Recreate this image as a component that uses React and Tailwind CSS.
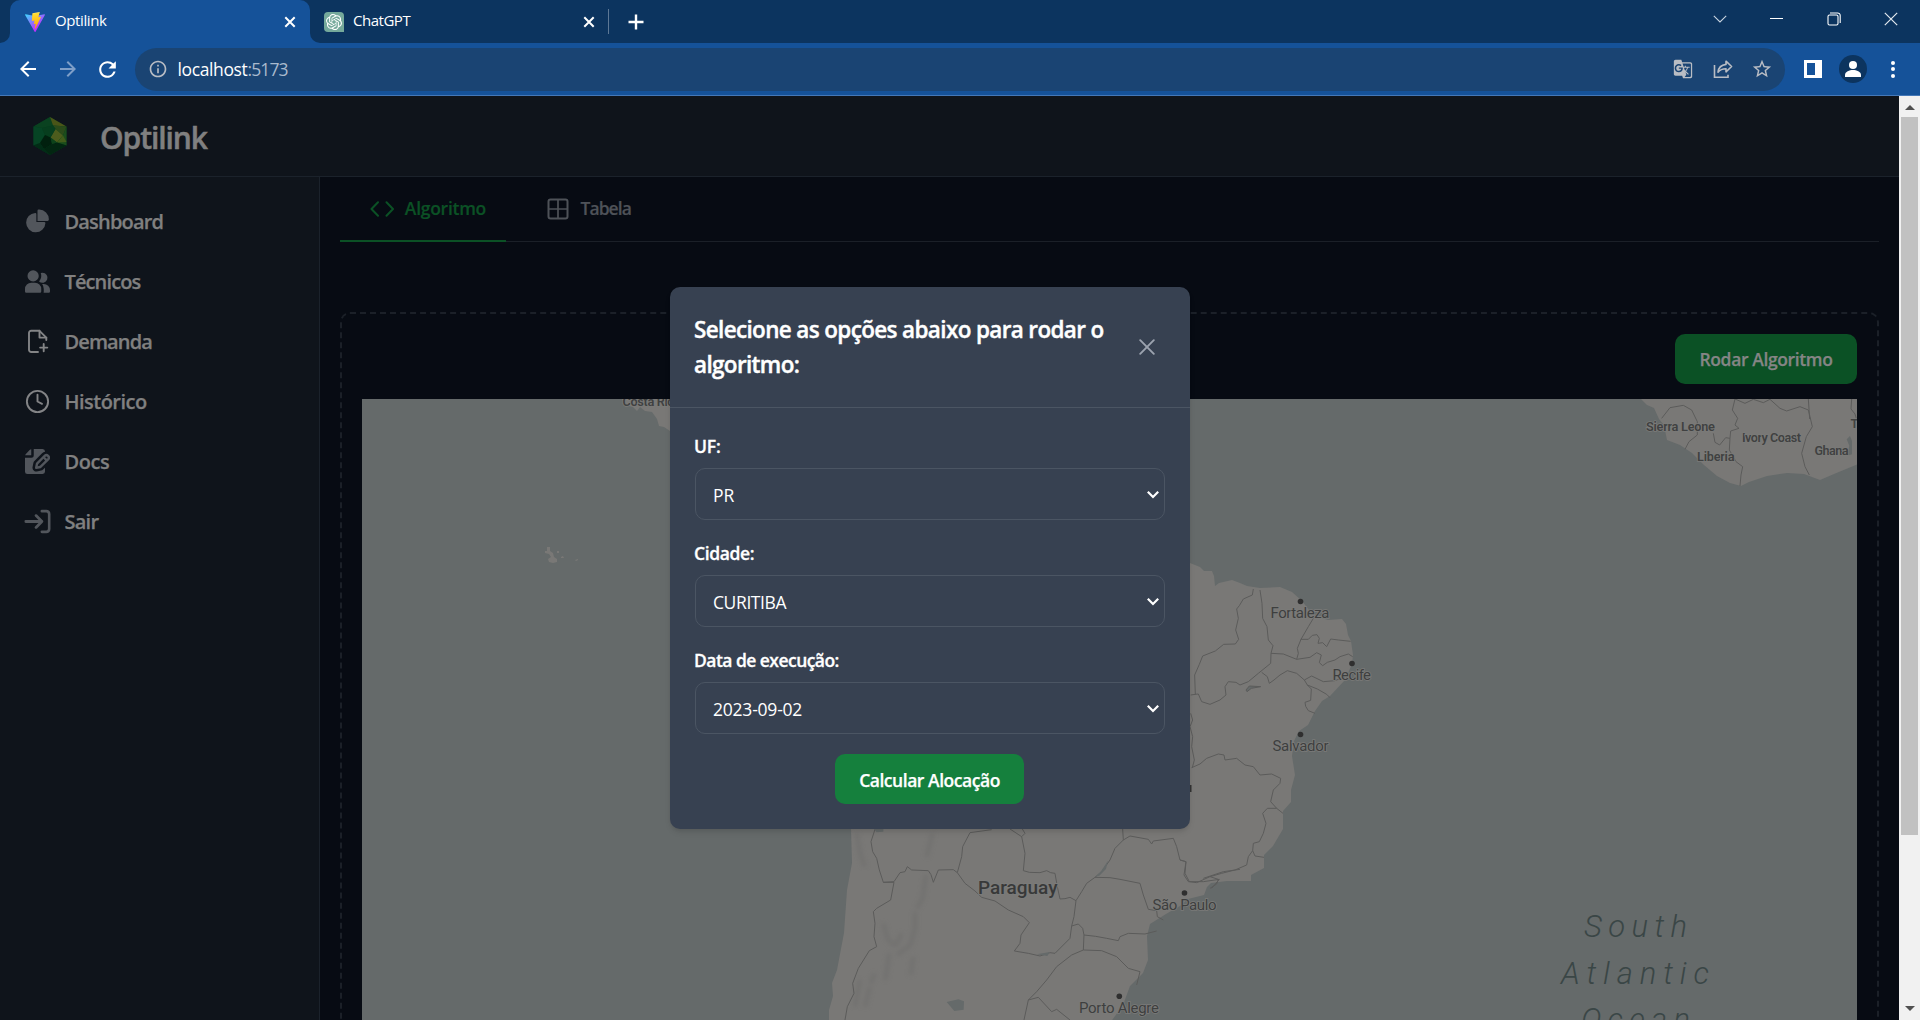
import React from 'react';
import {
  MdArrowBack,
  MdArrowForward,
  MdRefresh,
  MdInfoOutline,
  MdStarBorder,
  MdGTranslate,
} from 'react-icons/md';
import { SiOpenai } from 'react-icons/si';

/* ---------- browser chrome ---------- */

function CloseX({ className }) {
  return (
    <svg viewBox="0 0 12 12" className={className} fill="none" stroke="currentColor" strokeWidth="2">
      <path d="M1.3 1.3l9.4 9.4M10.7 1.3l-9.4 9.4" />
    </svg>
  );
}

function ViteLogo() {
  return (
    <svg viewBox="0 0 256 257" className="h-5 w-5 shrink-0">
      <defs>
        <linearGradient id="vA" x1="-.8%" x2="57.6%" y1="7.7%" y2="78.4%">
          <stop offset="0%" stopColor="#41D1FF" />
          <stop offset="100%" stopColor="#BD34FE" />
        </linearGradient>
        <linearGradient id="vB" x1="43.4%" x2="50.3%" y1="2.2%" y2="89%">
          <stop offset="0%" stopColor="#FFEA83" />
          <stop offset="8.3%" stopColor="#FFDD35" />
          <stop offset="100%" stopColor="#FFA800" />
        </linearGradient>
      </defs>
      <path
        fill="url(#vA)"
        d="M255.153 37.938L134.897 252.976c-2.483 4.44-8.862 4.466-11.382.048L.875 37.958c-2.746-4.814 1.371-10.646 6.827-9.67l120.385 21.517a6.537 6.537 0 0 0 2.322-.004l117.867-21.483c5.438-.991 9.574 4.796 6.877 9.62Z"
      />
      <path
        fill="url(#vB)"
        d="M185.432.063L96.44 17.501a3.268 3.268 0 0 0-2.634 3.014l-5.474 92.456a3.268 3.268 0 0 0 3.997 3.378l24.777-5.718c2.318-.535 4.413 1.507 3.936 3.838l-7.361 36.047c-.495 2.426 1.782 4.5 4.151 3.78l15.304-4.649c2.372-.72 4.652 1.36 4.15 3.788l-11.698 56.621c-.732 3.542 3.979 5.473 5.943 2.437l1.313-2.028l72.516-144.72c1.215-2.423-.88-5.186-3.54-4.672l-25.505 4.922c-2.396.462-4.435-1.77-3.759-4.114l16.646-57.705c.677-2.35-1.37-4.583-3.769-4.113Z"
      />
    </svg>
  );
}

function TabStrip() {
  return (
    <div className="flex h-[43px] bg-[#0c345f] text-[15px] text-white">
      <div className="flex w-[10px] shrink-0 items-end bg-[#155299]">
        <div className="h-full w-full rounded-br-[10px] bg-[#0c345f]" />
      </div>
      <div className="h-full w-[300px] shrink-0 bg-[#0c345f]">
        <div className="flex h-full items-center rounded-t-[10px] bg-[#155299] pl-[15px] pr-[14px]">
          <ViteLogo />
          <span className="ml-[10px] flex-1 pb-[2px] tracking-[-0.39px]">Optilink</span>
          <CloseX className="h-3 w-3" />
        </div>
      </div>
      <div className="w-[298px] shrink-0 bg-[#155299]">
        <div className="flex h-full items-center rounded-bl-[10px] bg-[#0c345f] pl-[14px] pr-[13px]">
          <div className="flex h-5 w-5 items-center justify-center rounded-l-[4px] rounded-tr-[4px] bg-[#75a99b]">
            <SiOpenai className="h-4 w-4" />
          </div>
          <span className="ml-[9px] flex-1 pb-[2px] tracking-[-0.48px]">ChatGPT</span>
          <CloseX className="h-3 w-3" />
        </div>
      </div>
      <div className="flex flex-1 items-center">
        <div className="h-[25px] w-px bg-[#5d7896]" />
        <svg viewBox="0 0 16 16" className="ml-[19px] h-4 w-4" stroke="white" strokeWidth="2.4">
          <path d="M8 .5v15M.5 8h15" />
        </svg>
      </div>
      <div className="flex h-[37px] text-white">
        <div className="flex w-[57px] items-center justify-center">
          <svg viewBox="0 0 14 8" className="h-2 w-3.5" fill="none" stroke="#c9d4e0" strokeWidth="1.1">
            <path d="M.8.8L7 7l6.2-6.2" />
          </svg>
        </div>
        <div className="flex w-[57px] items-center justify-center">
          <div className="h-px w-[13px] bg-white" />
        </div>
        <div className="flex w-[57px] items-center justify-center">
          <svg viewBox="0 0 14 14" className="h-3.5 w-3.5" fill="none" stroke="white" strokeWidth="1.1">
            <rect x="1" y="3" width="10" height="10" rx="1.5" />
            <path d="M3 1h7.5A2.6 2.6 0 0 1 13.2 3.6V11" />
          </svg>
        </div>
        <div className="flex w-[58px] items-center justify-center">
          <svg viewBox="0 0 14 14" className="h-3.5 w-3.5" stroke="#e3e9ef" strokeWidth="1.2">
            <path d="M.8.8l12.4 12.4M13.2.8L.8 13.2" />
          </svg>
        </div>
      </div>
    </div>
  );
}

function Toolbar() {
  return (
    <div className="flex h-[53px] items-center border-b border-[#4478b8] bg-[#155299] px-[7.5px] text-white">
      <div className="flex w-10 justify-center">
        <MdArrowBack className="h-6 w-6" />
      </div>
      <div className="flex w-10 justify-center text-[#7f9fc8]">
        <MdArrowForward className="h-6 w-6" />
      </div>
      <div className="flex w-10 justify-center">
        <MdRefresh className="h-[25px] w-[25px]" />
      </div>
      <div className="mx-[7.5px] flex h-[43px] flex-1 items-center rounded-full bg-[#1a4473] pl-[12.5px] pr-[12.5px] text-[17.5px] text-[#b9bdc4]">
        <MdInfoOutline className="h-5 w-5" />
        <span className="ml-[10px] pt-px text-white tracking-[-0.38px]">localhost</span>
        <span className="flex-1 pt-px text-[#a9bacd] tracking-[-0.85px]">:5173</span>
        <MdGTranslate className="h-5 w-5" />
        <svg viewBox="0 0 20 20" className="ml-[20px] h-5 w-5" fill="none" stroke="currentColor" strokeWidth="1.6">
          <path d="M1.5 6v12.2h13.5v-2.5" />
          <path d="M13 2.2l5.6 5.3-5.6 5.3v-3.1c-4 0-6 .9-8 3.5.5-4.4 3-7.2 8-7.8z" strokeLinejoin="round" />
        </svg>
        <MdStarBorder className="ml-[18px] h-[22px] w-[22px]" />
      </div>
      <div className="flex w-10 justify-center">
        <div className="h-[18px] w-[18px] border-[3px] border-r-[7px] border-white" />
      </div>
      <div className="flex w-10 justify-center">
        <svg viewBox="0 0 28 28" className="h-7 w-7">
          <circle cx="14" cy="14" r="14" fill="#0c345f" />
          <circle cx="14" cy="10" r="4" fill="white" />
          <path d="M6 22v-2c0-3.5 4.5-5 8-5s8 1.5 8 5v2z" fill="white" />
        </svg>
      </div>
      <div className="flex w-10 flex-col items-center gap-[2.5px]">
        <div className="h-1 w-1 rounded-full bg-white" />
        <div className="h-1 w-1 rounded-full bg-white" />
        <div className="h-1 w-1 rounded-full bg-white" />
      </div>
    </div>
  );
}

function Scrollbar() {
  return (
    <div className="flex w-[21px] shrink-0 flex-col items-center bg-[#f1f1f1]">
      <div className="flex h-[21px] items-center pt-[2px]">
        <svg viewBox="0 0 10 5" className="h-[5px] w-[10px]" fill="#505050">
          <path d="M0 5L5 0l5 5z" />
        </svg>
      </div>
      <div className="h-[718px] w-[17px] bg-[#c1c1c1]" />
      <div className="flex-1" />
      <div className="flex h-[21px] items-center pb-[3px]">
        <svg viewBox="0 0 10 5" className="h-[5px] w-[10px]" fill="#505050">
          <path d="M0 0l5 5 5-5z" />
        </svg>
      </div>
    </div>
  );
}

/* ---------- page ---------- */

function Logo() {
  return (
    <svg viewBox="0 0 34 38" className="h-[38px] w-[34px]">
      <path d="M17 0l16.5 9.5v19L17 38 .5 28.5v-19z" fill="#033d1f" />
      <path d="M17 0l3 8.5-11 2.5-8.5-1.5z" fill="#0a4220" />
      <path d="M17 0l16.5 9.5L20 8.5z" fill="#4a5518" />
      <path d="M20 8.5l13.5 1-3.5 9-7.5-6.5z" fill="#2b4a1a" />
      <path d="M22.5 12l7.5 6.5-6 7-6.5-5z" fill="#4d5c1d" />
      <path d="M33.5 9.5v19l-9.500-3 6-7z" fill="#1b4d1c" />
      <path d="M30 18.500l3.500 6.500-9.500.5z" fill="#425c1a" />
      <path d="M.5 9.500L9 11l3 7-5 8-6.500 2.500z" fill="#064424" />
      <path d="M9 11l11-2.500 2.500 3.500-5 8.500L12 18z" fill="#073e1e" />
      <path d="M12 18l5.500 2.500L19 27l-8 5-4-6z" fill="#01200e" />
      <path d="M.5 28.500L7 26l4 6 6 6z" fill="#022c16" />
      <path d="M19 27l5-1.500 9.500 3L17 38l-6-6z" fill="#022611" />
      <path d="M17.500 20.500l6.500 5-5 1.500z" fill="#0d431a" />
    </svg>
  );
}

function Header() {
  return (
    <div className="flex h-[81px] shrink-0 items-center border-b border-[#1b222b] bg-[#0f141b] pl-[33px]">
      <Logo />
      <span className="ml-[33px] pt-[2px] text-[30px] font-semibold text-[#808080] tracking-[-1.08px] [-webkit-text-stroke:0.5px_#808080]">
        Optilink
      </span>
    </div>
  );
}

const PieIcon = () => (
  <svg viewBox="0 0 22 21" className="h-[25px] w-[25px]" fill="currentColor">
    <path d="M16.975 11H10V4.025a1 1 0 0 0-1.066-.998 8.5 8.5 0 1 0 9.039 9.039.999.999 0 0 0-1-1.066h.002Z" />
    <path d="M12.5 0c-.157 0-.311.01-.565.027A1 1 0 0 0 11 1.02V10h8.975a1 1 0 0 0 1-.935c.013-.188.028-.374.028-.565A8.51 8.51 0 0 0 12.5 0Z" />
  </svg>
);

const UsersIcon = () => (
  <svg viewBox="0 0 20 18" className="h-[25px] w-[25px]" fill="currentColor">
    <path d="M14 2a3.963 3.963 0 0 0-1.4.267 6.439 6.439 0 0 1-1.331 6.638A4 4 0 1 0 14 2Zm1 9h-1.264A6.957 6.957 0 0 1 15 15v2a2.97 2.97 0 0 1-.184 1H19a1 1 0 0 0 1-1v-1a5.006 5.006 0 0 0-5-5ZM6.5 9a4.5 4.5 0 1 0 0-9 4.5 4.5 0 0 0 0 9ZM8 10H5a5.006 5.006 0 0 0-5 5v2a1 1 0 0 0 1 1h11a1 1 0 0 0 1-1v-2a5.006 5.006 0 0 0-5-5Z" />
  </svg>
);

const FilePlusIcon = () => (
  <svg viewBox="0 0 25 25" className="h-[25px] w-[25px] text-[#838486]" fill="none" stroke="currentColor" strokeWidth="1.9" strokeLinecap="round" strokeLinejoin="round">
    <path d="M13 23H6.2a2.2 2.2 0 0 1-2.2-2.2V4A2.2 2.2 0 0 1 6.2 1.8h8.3L21.3 8.6V11" />
    <path d="M14.5 1.8v6.8h6.8" />
    <path d="M18.7 15v7.2M15.1 18.6h7.2" />
  </svg>
);

const ClockIcon = () => (
  <svg viewBox="0 0 25 25" className="h-[25px] w-[25px] text-[#838486]" fill="none" stroke="currentColor" strokeWidth="1.9" strokeLinecap="round" strokeLinejoin="round">
    <circle cx="12.5" cy="12.5" r="10.6" />
    <path d="M12.5 5.8v6.7l4.5 2.3" />
  </svg>
);

const DocsIcon = () => (
  <svg viewBox="0 0 20 20" className="h-[25px] w-[25px]" fill="currentColor">
    <path d="M5 5V.13a2.96 2.96 0 0 0-1.293.749L.879 3.707A2.96 2.96 0 0 0 .13 5H5Z" />
    <path d="M6.737 11.061a2.961 2.961 0 0 1 .81-1.515l6.117-6.116A4.839 4.839 0 0 1 16 2.141V2a1.97 1.97 0 0 0-1.933-2H7v5a2 2 0 0 1-2 2H0v11a1.969 1.969 0 0 0 1.933 2h12.134A1.97 1.97 0 0 0 16 18v-3.093l-1.546 1.546c-.413.413-.94.695-1.513.81l-3.4.679a2.947 2.947 0 0 1-1.85-.227 2.96 2.96 0 0 1-1.635-3.257l.681-3.397Z" />
    <path d="M8.961 16a.93.93 0 0 0 .189-.019l3.4-.679a.961.961 0 0 0 .49-.263l6.118-6.117a2.884 2.884 0 0 0-4.079-4.078l-6.117 6.117a.96.96 0 0 0-.263.491l-.679 3.4A.961.961 0 0 0 8.961 16Zm7.477-9.8a.958.958 0 0 1 .68-.281.961.961 0 0 1 .682 1.644l-.315.315-1.36-1.36.313-.318Zm-5.911 5.911 4.236-4.236 1.359 1.359-4.236 4.237-1.7.339.341-1.699Z" />
  </svg>
);

const SairIcon = () => (
  <svg viewBox="0 0 18 16" className="h-[25px] w-[25px] scale-[1.06]" fill="none" stroke="currentColor" strokeWidth="1.9" strokeLinecap="round" strokeLinejoin="round">
    <path d="M1 8h11m0 0L8 4m4 4-4 4m4-11h3a2 2 0 0 1 2 2v10a2 2 0 0 1-2 2h-3" />
  </svg>
);

const NAV = [
  { label: 'Dashboard', Icon: PieIcon, cls: 'tracking-[-0.82px]' },
  { label: 'Técnicos', Icon: UsersIcon, cls: 'tracking-[-0.88px]' },
  { label: 'Demanda', Icon: FilePlusIcon, cls: 'tracking-[-0.88px]' },
  { label: 'Histórico', Icon: ClockIcon, cls: 'tracking-[-0.52px]' },
  { label: 'Docs', Icon: DocsIcon, cls: 'tracking-[-0.4px]' },
  { label: 'Sair', Icon: SairIcon, cls: 'tracking-[-0.75px]' },
];

function Sidebar() {
  return (
    <div className="flex w-[320px] shrink-0 flex-col border-r border-[#1b222b] bg-[#0f141b] pl-[25px] pt-[14px]">
      {NAV.map(({ label, Icon, cls }) => (
        <div key={label} className="flex h-[60px] items-center text-[#52565c]">
          <Icon />
          <span className="ml-[14.5px] pt-[2px] text-[20px] font-semibold leading-none text-[#808080] [-webkit-text-stroke:0.25px_#808080]">
            <span className={cls}>{label}</span>
          </span>
        </div>
      ))}
    </div>
  );
}

function Tabs() {
  return (
    <div className="flex h-[65px] border-b border-[#1b2028] text-[17.5px] font-semibold">
      <div className="-mb-px flex w-[166px] items-center justify-between border-b-2 border-[#0b5125] pl-[30px] pr-[20px] text-[#0b5125]">
        <svg viewBox="0 0 24 16" className="h-4 w-6" fill="none" stroke="currentColor" strokeWidth="2" strokeLinecap="round" strokeLinejoin="round">
          <path d="M8 1.3L1.5 8 8 14.7M16.5 1.3L23 8l-6.5 6.7" />
        </svg>
        <span className="tracking-[-0.27px] [-webkit-text-stroke:0.2px_#0b5125]">Algoritmo</span>
      </div>
      <div className="ml-[41px] flex items-center pb-px text-[#4e5258]">
        <svg viewBox="0 0 22 22" className="h-[22px] w-[22px]" fill="none" stroke="currentColor" strokeWidth="2">
          <rect x="1.5" y="1.5" width="19" height="19" rx="2" />
          <path d="M11 1.5v19M1.5 11h19" strokeWidth="1.7" />
        </svg>
        <span className="ml-[11.5px] tracking-[-0.95px] [-webkit-text-stroke:0.2px_#4e5258]">Tabela</span>
      </div>
    </div>
  );
}

const CITIES = [
  { name: 'Fortaleza', x: 1270.5, y: 618, w: 59, cx: 1300.5, cy: 601.5 },
  { name: 'Recife', x: 1332.5, y: 680, w: 38.5, cx: 1352, cy: 663.5 },
  { name: 'Salvador', x: 1272.5, y: 751, w: 56, cx: 1300.5, cy: 734.5 },
  { name: 'São Paulo', x: 1152.5, y: 909.5, w: 64, cx: 1184.5, cy: 893 },
  { name: 'Porto Alegre', x: 1079, y: 1013, w: 80, cx: 1119.3, cy: 996.3 },
];

const COUNTRIES = [
  { name: 'Sierra Leone', x: 1646, y: 431, w: 69 },
  { name: 'Ivory Coast', x: 1742, y: 441.5, w: 59 },
  { name: 'Liberia', x: 1697, y: 461.3, w: 37.5 },
  { name: 'Ghana', x: 1814.5, y: 454.7, w: 34 },
  { name: 'Costa Rica', x: 622.5, y: 406, w: 58 },
];

const OCEAN = [
  { word: 'South', x: 1584, y: 937, w: 103 },
  { word: 'Atlantic', x: 1561, y: 983.5, w: 148 },
  { word: 'Ocean', x: 1581, y: 1029.5, w: 109 },
];

function SouthAmericaMap() {
  return (
    <svg viewBox="362 399 1495 621" className="h-[621px] w-[1495px] bg-[#656a6a]">
      <defs>
        <filter id="soft" x="-20%" y="-20%" width="140%" height="140%">
          <feGaussianBlur stdDeviation="6" />
        </filter>
      </defs>
      <g fill="#797876">
        <path d="M851 829V700L780 640V540L900 450h200l90 113 10 4 4 4 8 0 2 5 1 10 4-3 13-3 8 3 7 3 13 2 20-1 12 5 10 9 11 14 15 5 14-1 4 5 2 11 3 6 2 14-1 9-7 16-15 16-8 5-7 10-7 14-9 6-5 10-2 15 3 19-4 15v12l-8 9v18l-10 17-9 9v13l-13 7v6l-24 0-8 1-8 1-4 4-3 8-8 2-8 2-8 7-14 8-16 10-3 12 1 24-5 13-13 13-7 19-13 18H829l0-13 4-14-1-13 5-13 7-37 3-43 5-27z" />
        <path d="M1641 399l6 6 7 3 5 11 5 6 3 15 13 5 12 8 12 12 13 11 13 7 11 3 8-4 18-6 20-3 17 1 16 6 14-6 24-10V399z" />
        <path d="M622 399l3 6 8 2 4 4 3-4 5 4 7 1 5 7 2 7 5 1 6 4V399z" />
        <path d="M547 547h3v4l3 2 1 4 3 2v3l-4 1-4-1-1-3 3-2-2-3-4-1v-2h2zM561 557l2-1 1 2h-3zM575 560l3-1v1l-2 1zM557 551h2v2h-2z" />
      </g>
      <g fill="none" stroke="#6b6a69" strokeWidth="12" filter="url(#soft)" strokeLinejoin="round" transform="translate(820 820) scale(.33333)" opacity=".5">
        <path d="M338 40l-18 70M318 165l-10 70-18 30M285 275l0 50-14 50-40 30M190 310l12 45 18 20M208 400l-12 80M280 410l-8 55M110 40l10 60 15 40M120 480l-15 80M150 500l-15 60M165 460l-14 30M245 340l-20 40" />
      </g>
      <g fill="none" stroke="#5b5b5a" strokeWidth="3" strokeLinejoin="round" transform="translate(1180 540) scale(.33333)">
        <path d="M220 147l-3 18-27 12-12 20-8 10 5 28-8 35 9 28-10 14-35 1-25 20-38 15-10 25-14 32 2 58-14 2" />
        <path d="M240 150l6 40 2 45 13 25 4 40 14 17-6 23 37 2 40 16 5-18-3-15 11-27 22-38 15-25" />
        <path d="M362 298l23 0 12-12 14-2 7 11-4 15 14-2 12 12 12-23 23 3 37 4" />
        <path d="M350 358l40-6 20-14 14 7-6 23 10 9 14-10 23-7 15-10 25-8 13 8" />
        <path d="M273 340l-1 30-37 30-30 25-25 10-12-8-23-2-10 15 3 25-18 15-30 13-25-8-10-23-10 1" />
        <path d="M245 397l17 13 6 20 14-10 18-15 22-13 28 8 23 20 22-12 35 17 35-3 35-14" />
        <path d="M373 420l9 15 30 12 28 16 10 10M382 435l12 12-2 34-17 6 2 12 8 13 20 8" />
        <path d="M35 683l25-11 20-17 35-13 17 3 3 15 35-5 25 20 25 5 20 25 35-3 27 13-2 15-20 20-8 35 18 20 19 15" />
        <path d="M290 805l-28 0-14 15 10 30-8 30-12 25-18 5-2 22 7 16 27 4" />
        <path d="M218 932l-13 18-5 25-35 15-40 10-35 10-40 18-22-3-13-25 3-35-18-5M90 1010l25 8-5 14-20 13M32 520l6 20-8 20 8 30-3 30 8 40-6 23" />
        <path d="M198 450l10-12 34 2-28 5-13 10z" fill="#656a6a" />
      </g>
      <g fill="none" stroke="#5b5b5a" strokeWidth="3" strokeLinejoin="round" transform="translate(820 820) scale(.33333)">
        <path d="M165 28l-12 37 5 30 12 20 8 35 12 37 32 0-10 53-42 25-10 10 5 35-3 40 8 30-22 12-33 53-17 45 4 30-20 40-7 40" />
        <path d="M190 187l32-2 18-27 15-3 7-15 13 10 50 2 8 12 7 23 15-37 45-1 12 9" />
        <path d="M515 29l-65 9-22 42-3 30-13 48 23 32 30 23 20 19 40 11 40 27 45 20 18 18-25 37-3 25-17 23 42 7 35 8 30-10 15 2 45-45 5-37" />
        <path d="M570 27l35 23 10-10-8-13M605 50l10 50-5 52 18 5 32 1 20-6 12 6 13 2 7 40 8 37 15-1 15-4 18 10-6 48-7 28" />
        <path d="M768 242l17-27 15-25 25-18 20-17 25-35 15-35 25-25 20-12 55 10 10 14 5-9 60-8 10 25 10 40 18 5-6 40 13 20 45 0 48-7-23 27M910 60l-2-33M1150 175l60-20 50-7" />
        <path d="M825 172l45 1 30 5 60 12 10 35 15 43 25 4 2 18 18 10" />
        <path d="M755 318l20-6 13 13 4 20 35 4 33 6 35 7 5-12 25-10 50 2 35-9" />
        <path d="M792 345l-2 45 55 2 45 18 35 35 35 10-10 40M790 390l-35 15-45 35-30 40-30 35-25 25-13 60M625 540l30-8 40 43 15-7 40 32" />
        <path d="M380 546l35-8 17 6-1 25-28 4zM650 403l40-7-8 12zM826 170l18-18 20-30-6 25-20 20zM160 25h30v10l-20 2z" fill="#656a6a" stroke="none" />
      </g>
      <g fill="none" stroke="#5b5b5a" strokeWidth="3" strokeLinejoin="round" transform="translate(1620 310) scale(.33333)">
        <path d="M125 325l25-32 40-7 25 14 17 35 0 40-25 20-12 23M345 267l-8 33 16 25-8 20 12 10-25 8-2 22-13-2-18 22-14-8-5-27" />
        <path d="M330 385l-2 35 20 35 20 15-5 25-3 33M345 267l30 13 25-12 30 10 20-10 30 27 20 8 40-13 25 10 5 20 7 30-18 30-14 50 10 40 13 25M565 267l4 60M695 267l-2 30 12 15 6 20" />
        <path d="M680 388l10-10 6 15 0 40-14 4 6-30z" fill="#656a6a" stroke="none" />
      </g>
      <rect x="1189" y="785" width="2.5" height="7" fill="#333" />
      <g fontFamily="Roboto, sans-serif" fontSize="15" fontWeight="400" fill="#3e3f3f" stroke="#7b7b79" strokeWidth="1.6" style={{ paintOrder: 'stroke' }}>
        {CITIES.map((c) => (
          <g key={c.name}>
            <text x={c.x} y={c.y} textLength={c.w}>{c.name}</text>
            <circle cx={c.cx} cy={c.cy} r="2.8" fill="#2f2f2f" stroke="none" />
          </g>
        ))}
      </g>
      <g fontFamily="Roboto, sans-serif" fontSize="12.8" fontWeight="600" fill="#404141" stroke="#7b7b79" strokeWidth="1.6" style={{ paintOrder: 'stroke' }}>
        {COUNTRIES.map((c) => (
          <text key={c.name} x={c.x} y={c.y} textLength={c.w}>{c.name}</text>
        ))}
        <text x="1850.5" y="427.5">T</text>
      </g>
      <text x="978" y="894" textLength="79.5" fontFamily="Roboto, sans-serif" fontSize="19" fontWeight="500" fill="#383939" stroke="#7b7b79" strokeWidth="2" style={{ paintOrder: 'stroke' }}>
        Paraguay
      </text>
      <g fontFamily="Roboto, sans-serif" fontSize="31" fontStyle="italic" fontWeight="300" fill="#3a4646">
        {OCEAN.map((o) => (
          <text key={o.word} x={o.x} y={o.y} textLength={o.w}>{o.word}</text>
        ))}
      </g>
    </svg>
  );
}

function Field({ label, value, labelCls, valueCls }) {
  return (
    <div className="flex flex-col gap-[9px]">
      <div className="-ml-px pt-px text-[17.5px] font-semibold leading-[25px] [-webkit-text-stroke:0.3px_white]">
        <span className={labelCls}>{label}</span>
      </div>
      <div className="flex h-[52px] items-center justify-between rounded-[10px] border border-[#4b5563] pl-[17px] pr-[4px] text-[17.5px]">
        <span className="pt-[2px]">
          <span className={valueCls}>{value}</span>
        </span>
        <svg viewBox="0 0 14 10" className="mt-px h-[10px] w-[14px]" fill="none" stroke="white" strokeWidth="2.2">
          <path d="M1.8 1.8L7 7l5.2-5.2" />
        </svg>
      </div>
    </div>
  );
}

function Modal() {
  return (
    <div className="h-[542px] w-[520px] rounded-[10px] bg-[#374151] text-white shadow-md">
      <div className="flex h-[121px] items-center justify-between border-b border-[#4b5563] pl-[24px] pr-[35px]">
        <h3 className="text-[22.5px] font-semibold leading-[35px] tracking-[-0.65px] [-webkit-text-stroke:0.4px_white]">
          Selecione as opções abaixo para rodar o
          <br />
          algoritmo:
        </h3>
        <svg viewBox="0 0 16 16" className="h-4 w-4" fill="none" stroke="#9ca3af" strokeWidth="1.9" strokeLinecap="round">
          <path d="M1.2 1.2l13.6 13.6M14.8 1.2L1.2 14.8" />
        </svg>
      </div>
      <div className="flex flex-col gap-5 px-[25px] pt-[25px]">
        <Field label="UF:" value="PR" labelCls="tracking-[-0.16px]" valueCls="" />
        <Field label="Cidade:" value="CURITIBA" labelCls="tracking-[-0.36px]" valueCls="tracking-[-0.4px]" />
        <Field label="Data de execução:" value="2023-09-02" labelCls="tracking-[-0.54px]" valueCls="tracking-[-0.22px]" />
        <button className="mr-px h-[50px] w-[189px] self-center rounded-[10px] bg-[#15803d] pt-[2px] text-[17.5px] font-semibold tracking-[-0.46px] [-webkit-text-stroke:0.25px_white]">
          Calcular Alocação
        </button>
      </div>
    </div>
  );
}

function Content() {
  return (
    <div className="min-w-0 flex-1 overflow-hidden bg-[#070b13] px-5">
      <Tabs />
      <div className="mt-[70px] h-[900px] rounded-[10px] border-2 border-dashed border-[#1b2028] p-5">
        <div className="flex flex-col items-end">
          <button className="h-[50px] w-[182px] rounded-[10px] bg-[#0b5125] pt-px text-[17.5px] font-semibold text-[#858585] tracking-[-0.37px] [-webkit-text-stroke:0.25px_#858585]">
            Rodar Algoritmo
          </button>
          <div className="mt-[15px] self-start">
            <SouthAmericaMap />
          </div>
        </div>
      </div>
    </div>
  );
}

export default function App() {
  return (
    <div className="flex h-[1020px] w-[1920px] flex-col overflow-hidden font-['Open_Sans','Noto_Sans',sans-serif]">
      <TabStrip />
      <Toolbar />
      <div className="flex min-h-0 flex-1">
        <div className="relative flex min-w-0 flex-1 flex-col overflow-hidden">
          <Header />
          <div className="flex min-h-0 flex-1">
            <Sidebar />
            <Content />
          </div>
          <div className="absolute inset-0 flex items-center justify-center pr-[39px]">
            <Modal />
          </div>
        </div>
        <Scrollbar />
      </div>
    </div>
  );
}
